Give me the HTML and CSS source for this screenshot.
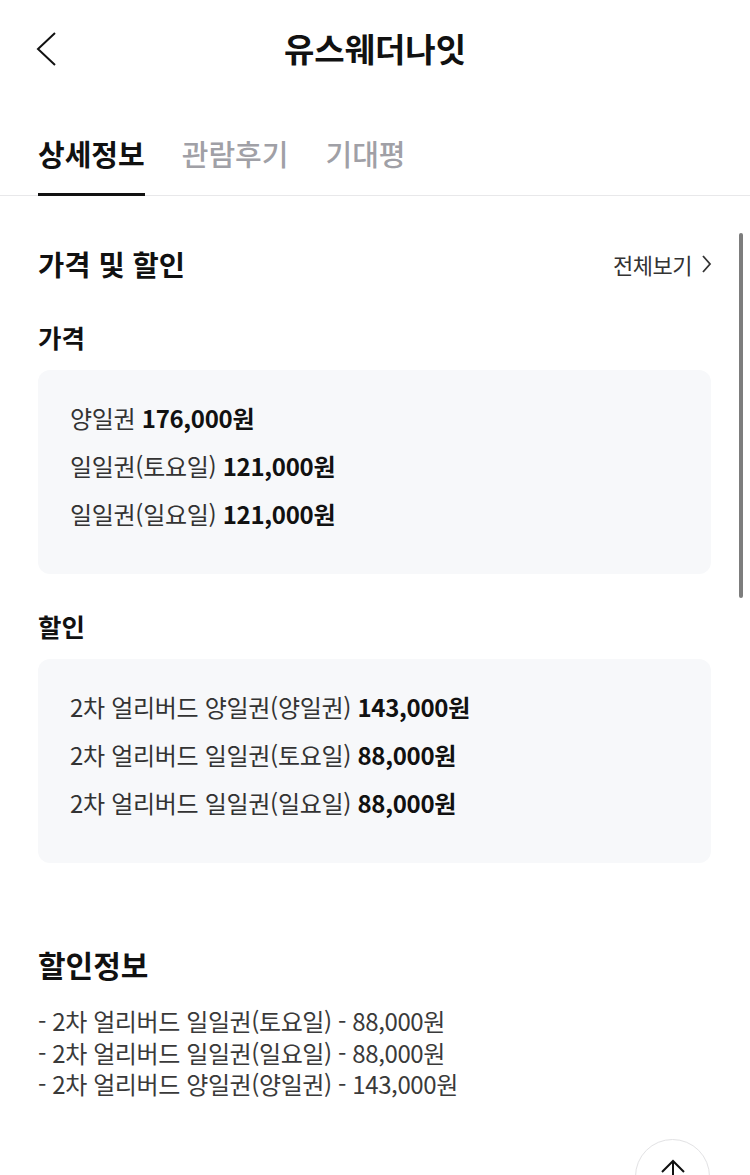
FILE: index.html
```html
<!DOCTYPE html>
<html lang="ko">
<head>
<meta charset="utf-8">
<title>유스웨더나잇</title>
<link rel="stylesheet" href="styles.css">
</head>
<body>
<div class="page">
  <header class="topbar">
    <svg class="back" width="24" height="40" viewBox="0 0 24 40" aria-hidden="true">
      <polyline points="19,2 2,18 19,34" fill="none" stroke="#111" stroke-width="2"/>
    </svg>
    <h1 class="title">유스웨더나잇</h1>
  </header>

  <nav class="tabs">
    <a class="tab active">상세정보</a>
    <a class="tab">관람후기</a>
    <a class="tab">기대평</a>
  </nav>

  <main class="content">
    <div class="sec-head">
      <h2 class="sec-title">가격 및 할인</h2>
      <a class="more">전체보기
        <svg width="12" height="18" viewBox="0 0 12 18" aria-hidden="true">
          <polyline points="2,1 9,9 2,17" fill="none" stroke="#333" stroke-width="1.8"/>
        </svg>
      </a>
    </div>

    <h3 class="sub">가격</h3>
    <div class="box">
      <p class="line">양일권 <b>176,000원</b></p>
      <p class="line">일일권(토요일) <b>121,000원</b></p>
      <p class="line">일일권(일요일) <b>121,000원</b></p>
    </div>

    <h3 class="sub sub-gap">할인</h3>
    <div class="box">
      <p class="line">2차 얼리버드 양일권(양일권) <b>143,000원</b></p>
      <p class="line">2차 얼리버드 일일권(토요일) <b>88,000원</b></p>
      <p class="line">2차 얼리버드 일일권(일요일) <b>88,000원</b></p>
    </div>

    <h2 class="info-title">할인정보</h2>
    <div class="info">
      <p>- 2차 얼리버드 일일권(토요일) - 88,000원</p>
      <p>- 2차 얼리버드 일일권(일요일) - 88,000원</p>
      <p>- 2차 얼리버드 양일권(양일권) - 143,000원</p>
    </div>
  </main>

  <div class="scrollbar"></div>
  <button class="to-top" aria-label="맨 위로">
    <svg width="26" height="40" viewBox="0 0 26 40" aria-hidden="true">
      <polyline points="2,14 13,3 24,14" fill="none" stroke="#111" stroke-width="2"/>
      <line x1="13" y1="3" x2="13" y2="40" stroke="#111" stroke-width="2"/>
    </svg>
  </button>
</div>
</body>
</html>
```

FILE: styles.css
```css
* { box-sizing: border-box; }
html, body {
  margin: 0;
  padding: 0;
  background: #fff;
}
body {
  font-family: "Noto Sans CJK KR", "Noto Sans", sans-serif;
  color: #111;
}
.page {
  position: relative;
  width: 750px;
  height: 1175px;
  overflow: hidden;
}
.topbar {
  height: 100px;
  display: flex;
  align-items: center;
  justify-content: center;
  position: relative;
}
.back {
  position: absolute;
  left: 36px;
  top: 31px;
}
.title {
  margin: 0 0 4px;
  font-size: 33px;
  line-height: 40px;
  font-weight: 700;
  letter-spacing: 0;
  color: #111;
}
.tabs {
  display: flex;
  gap: 37px;
  padding: 0 38px;
  border-bottom: 1px solid #e8e8ea;
}
.tab {
  display: block;
  padding: 35px 0 22px;
  font-size: 29px;
  line-height: 36px;
  font-weight: 500;
  color: #a0a0a6;
  border-bottom: 3px solid transparent;
  margin-bottom: -1px;
}
.tab.active {
  color: #111;
  border-bottom-color: #111;
  font-weight: 700;
}
.content {
  padding: 0 39px 0 38px;
}
.sec-head {
  display: flex;
  align-items: center;
  justify-content: space-between;
  margin-top: 48px;
  height: 40px;
}
.sec-title {
  margin: 0;
  font-size: 28.5px;
  line-height: 40px;
  font-weight: 700;
  color: #111;
}
.more {
  display: flex;
  align-items: center;
  gap: 9px;
  font-size: 22px;
  line-height: 30px;
  color: #333;
  letter-spacing: -0.5px;
  margin-right: -2px;
}
.sub {
  margin: 37px 0 0;
  font-size: 25.5px;
  line-height: 32px;
  font-weight: 700;
  color: #111;
}
.sub.sub-gap {
  margin-top: 36px;
}
.box {
  margin-top: 17px;
  background: #f7f8fa;
  border-radius: 12px;
  padding: 24px 32px 36px;
}
.line {
  margin: 0;
  font-size: 24px;
  line-height: 48px;
  color: #333;
  letter-spacing: -0.3px;
}
.line b {
  font-weight: 700;
  color: #111;
}
.info-title {
  margin: 81px 0 0;
  font-size: 30px;
  line-height: 40px;
  font-weight: 700;
  color: #111;
}
.info {
  margin-top: 21px;
}
.info p {
  margin: 0;
  font-size: 24px;
  line-height: 31.5px;
  color: #3a3a3a;
  letter-spacing: -0.4px;
}
.scrollbar {
  position: absolute;
  left: 739px;
  top: 233px;
  width: 4px;
  height: 365px;
  border-radius: 2px;
  background: #7d7d7d;
}
.to-top {
  position: absolute;
  left: 635px;
  top: 1139px;
  width: 75px;
  height: 75px;
  border-radius: 50%;
  border: 1.5px solid #e2e2e4;
  background: #fff;
  padding: 0;
  display: flex;
  justify-content: center;
  align-items: flex-start;
  padding-top: 18px;
}
```
